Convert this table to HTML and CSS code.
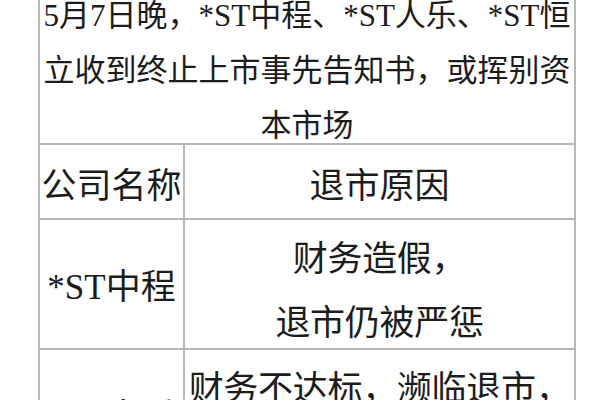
FILE: index.html
```html
<!DOCTYPE html>
<html lang="zh-CN">
<head>
<meta charset="utf-8">
<title>退市</title>
<link rel="stylesheet" href="styles.css">
</head>
<body>
<table class="grid">
  <colgroup>
    <col class="col-name">
    <col class="col-reason">
  </colgroup>
  <tr class="title-row">
    <td class="title" colspan="2"><div class="title-text">5月7日晚，*ST中程、*ST人乐、*ST恒<br>立收到终止上市事先告知书，或挥别资<br>本市场</div></td>
  </tr>
  <tr class="head">
    <td class="name">公司名称</td>
    <td class="reason">退市原因</td>
  </tr>
  <tr class="row">
    <td class="name">*ST中程</td>
    <td class="reason"><div class="lines">财务造假，<br>退市仍被严惩</div></td>
  </tr>
  <tr class="row">
    <td class="name">*ST人乐</td>
    <td class="reason"><div class="lines">财务不达标，濒临退市，<br>积极自救</div></td>
  </tr>
</table>
</body>
</html>
```
FILE: styles.css
```css
html, body {
  margin: 0;
  padding: 0;
  background: #ffffff;
  overflow: hidden;
}
body {
  font-family: "Liberation Serif", "Noto Sans CJK SC", serif;
  color: #1c1c1c;
}
.grid {
  border-collapse: collapse;
  margin: -14px 0 0 38px;
  width: 536px;
  table-layout: fixed;
}
.col-name {
  width: 145px;
}
.col-reason {
  width: 391px;
}
.grid td {
  border: 2px solid #b8b8b8;
  padding: 0;
  text-align: center;
  vertical-align: middle;
  white-space: nowrap;
}
.title {
  font-size: 31px;
  vertical-align: top;
}
.title-text {
  line-height: 55px;
  margin-bottom: -10px;
}
.name,
.reason {
  font-size: 35px;
}
.head td {
  height: 63px;
  line-height: 44px;
  padding-top: 10px;
}
.row td {
  height: 121px;
  padding-top: 7px;
  line-height: 44px;
}
.lines {
  line-height: 64px;
  margin-bottom: -8px;
  letter-spacing: -0.3px;
}
```
